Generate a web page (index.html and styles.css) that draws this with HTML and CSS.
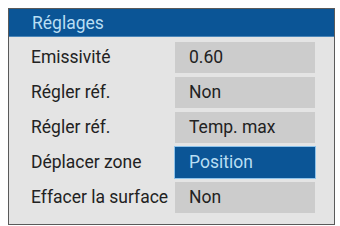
FILE: index.html
```html
<!DOCTYPE html>
<html lang="fr">
<head>
    <meta charset="UTF-8">
    <title>Réglages</title>
    <link rel="stylesheet" href="styles.css">
</head>
<body>

<div class="panel">
    <div class="panel-title">Réglages</div>
    <div class="settings">
        <div class="label">Emissivité</div>
        <div class="value">0.60</div>

        <div class="label">Régler réf.</div>
        <div class="value">Non</div>

        <div class="label">Régler réf.</div>
        <div class="value">Temp. max</div>

        <div class="label">Déplacer zone</div>
        <div class="value selected">Position</div>

        <div class="label">Effacer la surface</div>
        <div class="value">Non</div>
    </div>
</div>

</body>
</html>
```

FILE: styles.css
```css
* {
    margin: 0;
    padding: 0;
    box-sizing: border-box;
}

body {
    font-family: Roboto, 'Liberation Sans', sans-serif;
    background: #fff;
    padding: 8px 5px 0 8px;
}

.panel {
    width: 327px;
    height: 217px;
    border: 1px solid #5a5a5a;
    background: #e4e4e4;
}

.panel-title {
    height: 28px;
    background: #0b5596;
    color: #b9def3;
    font-size: 17.5px;
    line-height: 28px;
    padding-left: 23px;
    border-bottom: 1px solid #4b86b8;
}

.settings {
    display: grid;
    grid-template-columns: 144px 140px;
    grid-auto-rows: 31px;
    row-gap: 4px;
    padding: 5px 0 0 22px;
}

.label,
.value {
    font-size: 17.5px;
    line-height: 31px;
    color: #222;
    white-space: nowrap;
}

.value {
    background: #cccccc;
    padding-left: 14px;
}

.value.selected {
    background: #0b5596;
    color: #b9def3;
    box-shadow: 0 0 0 1px #8fc3ea;
}
```
